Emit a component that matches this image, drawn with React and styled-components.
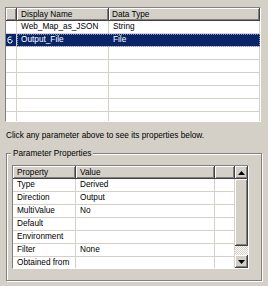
import styled, { createGlobalStyle } from "styled-components";

const GlobalStyle = createGlobalStyle`
  html, body {
    margin: 0;
    padding: 0;
    background: #d4d0c8;
  }
  body {
    font-family: "Liberation Sans", Arial, sans-serif;
    font-size: 8.25px;
    color: #000;
  }
`;

const Page = styled.div`
  width: 268px;
  height: 286px;
  padding-top: 7px;
  box-sizing: border-box;
  overflow: hidden;
`;

const Sunken = styled.div`
  box-sizing: border-box;
  border-top: 1px solid #808080;
  border-left: 1px solid #808080;
  border-right: 1px solid #ffffff;
  border-bottom: 1px solid #ffffff;
  background: #ffffff;
  overflow: hidden;
`;

const ParamGrid = styled(Sunken)`
  margin-left: 5px;
  width: 256px;
  height: 115px;
`;

const Grid = styled.div`
  display: grid;
  grid-template-columns: ${(p) => p.$cols};
  grid-auto-rows: 13px;
`;

const HeaderCell = styled.div`
  box-sizing: border-box;
  background: #d4d0c8;
  box-shadow: inset -1px -1px #404040, inset 1px 1px #ffffff,
    inset -2px -2px #808080;
  padding-left: ${(p) => p.$pad ?? 4}px;
  line-height: 13px;
  white-space: nowrap;
  overflow: hidden;
`;

const Cell = styled.div`
  box-sizing: border-box;
  border-right: 1px solid #d4d0c8;
  border-bottom: 1px solid #d4d0c8;
  padding-left: 4px;
  line-height: 12px;
  white-space: nowrap;
  overflow: hidden;
  background: #ffffff;
`;

const SelectedSpan = styled.div`
  grid-column: 2 / 4;
  display: grid;
  grid-template-columns: 92px 1fr;
  box-sizing: border-box;
  background: #0a246a;
  color: #ffffff;
  outline: 1px dotted #8a94b8;
  outline-offset: -1px;
  border-bottom: 1px solid #d4d0c8;
`;

const SelectedCell = styled.div`
  padding-left: 4px;
  line-height: 12px;
  white-space: nowrap;
`;

const RowMarker = styled.div`
  box-sizing: border-box;
  border-right: 1px solid #d4d0c8;
  border-bottom: 1px solid #d4d0c8;
  display: flex;
  align-items: center;
  padding-left: 1px;
  background: ${(p) => (p.$active ? "#0a246a" : "#ffffff")};
`;

const Hint = styled.div`
  margin-top: 7px;
  padding-left: 6px;
  line-height: 13px;
  height: 13px;
`;

const GroupBox = styled.div`
  position: relative;
  box-sizing: border-box;
  margin-top: 11px;
  margin-left: 6px;
  width: 256px;
  height: 128px;
  border: 1px solid #808080;
  box-shadow: inset 1px 1px #ffffff, 1px 1px #ffffff;
  padding: 11px 0 0 5px;
`;

const Legend = styled.span`
  position: absolute;
  top: -7px;
  left: 4px;
  padding: 0 2px;
  background: #d4d0c8;
  line-height: 13px;
`;

const PropGrid = styled(Sunken)`
  width: 237px;
  height: 104px;
  display: flex;
`;

const PropTable = styled.div`
  width: 222px;
`;

const ScrollBar = styled.div`
  width: 13px;
  display: flex;
  flex-direction: column;
`;

const ScrollButton = styled.div`
  box-sizing: border-box;
  height: 13px;
  background: #d4d0c8;
  box-shadow: inset -1px -1px #404040, inset 1px 1px #ffffff,
    inset -2px -2px #808080;
  display: flex;
  align-items: center;
  justify-content: center;
`;

const Thumb = styled.div`
  box-sizing: border-box;
  height: 67px;
  background: #d4d0c8;
  box-shadow: inset -1px -1px #404040, inset 1px 1px #ffffff,
    inset -2px -2px #808080;
`;

const Track = styled.div`
  flex: 1;
  background-color: #ffffff;
  background-image: repeating-conic-gradient(#d4d0c8 0 25%, #ffffff 0 50%);
  background-size: 2px 2px;
`;

const Arrow = ({ down }) => (
  <svg width="7" height="4" viewBox="0 0 7 4">
    {down ? (
      <path d="M0 0 H7 L3.5 4 Z" fill="#000" />
    ) : (
      <path d="M0 4 H7 L3.5 0 Z" fill="#000" />
    )}
  </svg>
);

// small edit marker shown in the row header of the current row
const Marker = () => (
  <svg width="6" height="8" viewBox="0 0 6 8">
    <path
      d="M4.5 1 H2 L1 2.5 V6 L2 7 H4 L5 6 V4.5 L4 3.5 H1.5"
      fill="none"
      stroke="#fff"
      strokeWidth="1"
    />
  </svg>
);

const params = [
  { name: "Web_Map_as_JSON", type: "String" },
  { name: "Output_File", type: "File", selected: true },
];

const props = [
  ["Type", "Derived"],
  ["Direction", "Output"],
  ["MultiValue", "No"],
  ["Default", ""],
  ["Environment", ""],
  ["Filter", "None"],
  ["Obtained from", ""],
];

export default function App() {
  const emptyRows = 8 - params.length;
  return (
    <Page>
      <GlobalStyle />
      <ParamGrid>
        <Grid $cols="11px 92px 151px">
          <HeaderCell />
          <HeaderCell>Display Name</HeaderCell>
          <HeaderCell $pad={3}>Data Type</HeaderCell>
          {params.map((p) =>
            p.selected
              ? [
                  <RowMarker key={p.name + "m"} $active>
                    <Marker />
                  </RowMarker>,
                  <SelectedSpan key={p.name}>
                    <SelectedCell>{p.name}</SelectedCell>
                    <SelectedCell>{p.type}</SelectedCell>
                  </SelectedSpan>,
                ]
              : [
                  <RowMarker key={p.name + "m"} />,
                  <Cell key={p.name + "n"}>{p.name}</Cell>,
                  <Cell key={p.name + "t"}>{p.type}</Cell>,
                ]
          )}
          {Array.from({ length: emptyRows }).map((_, i) => [
            <RowMarker key={"em" + i} />,
            <Cell key={"en" + i} />,
            <Cell key={"et" + i} />,
          ])}
        </Grid>
      </ParamGrid>

      <Hint>Click any parameter above to see its properties below.</Hint>

      <GroupBox>
        <Legend>Parameter Properties</Legend>
        <PropGrid>
          <PropTable>
            <Grid $cols="63px 139px 20px">
              <HeaderCell>Property</HeaderCell>
              <HeaderCell>Value</HeaderCell>
              <HeaderCell />
              {props.map(([k, v]) => [
                <Cell key={k + "k"}>{k}</Cell>,
                <Cell key={k + "v"}>{v}</Cell>,
                <Cell key={k + "x"} />,
              ])}
            </Grid>
          </PropTable>
          <ScrollBar>
            <ScrollButton>
              <Arrow />
            </ScrollButton>
            <Thumb />
            <Track />
            <ScrollButton>
              <Arrow down />
            </ScrollButton>
          </ScrollBar>
        </PropGrid>
      </GroupBox>
    </Page>
  );
}
